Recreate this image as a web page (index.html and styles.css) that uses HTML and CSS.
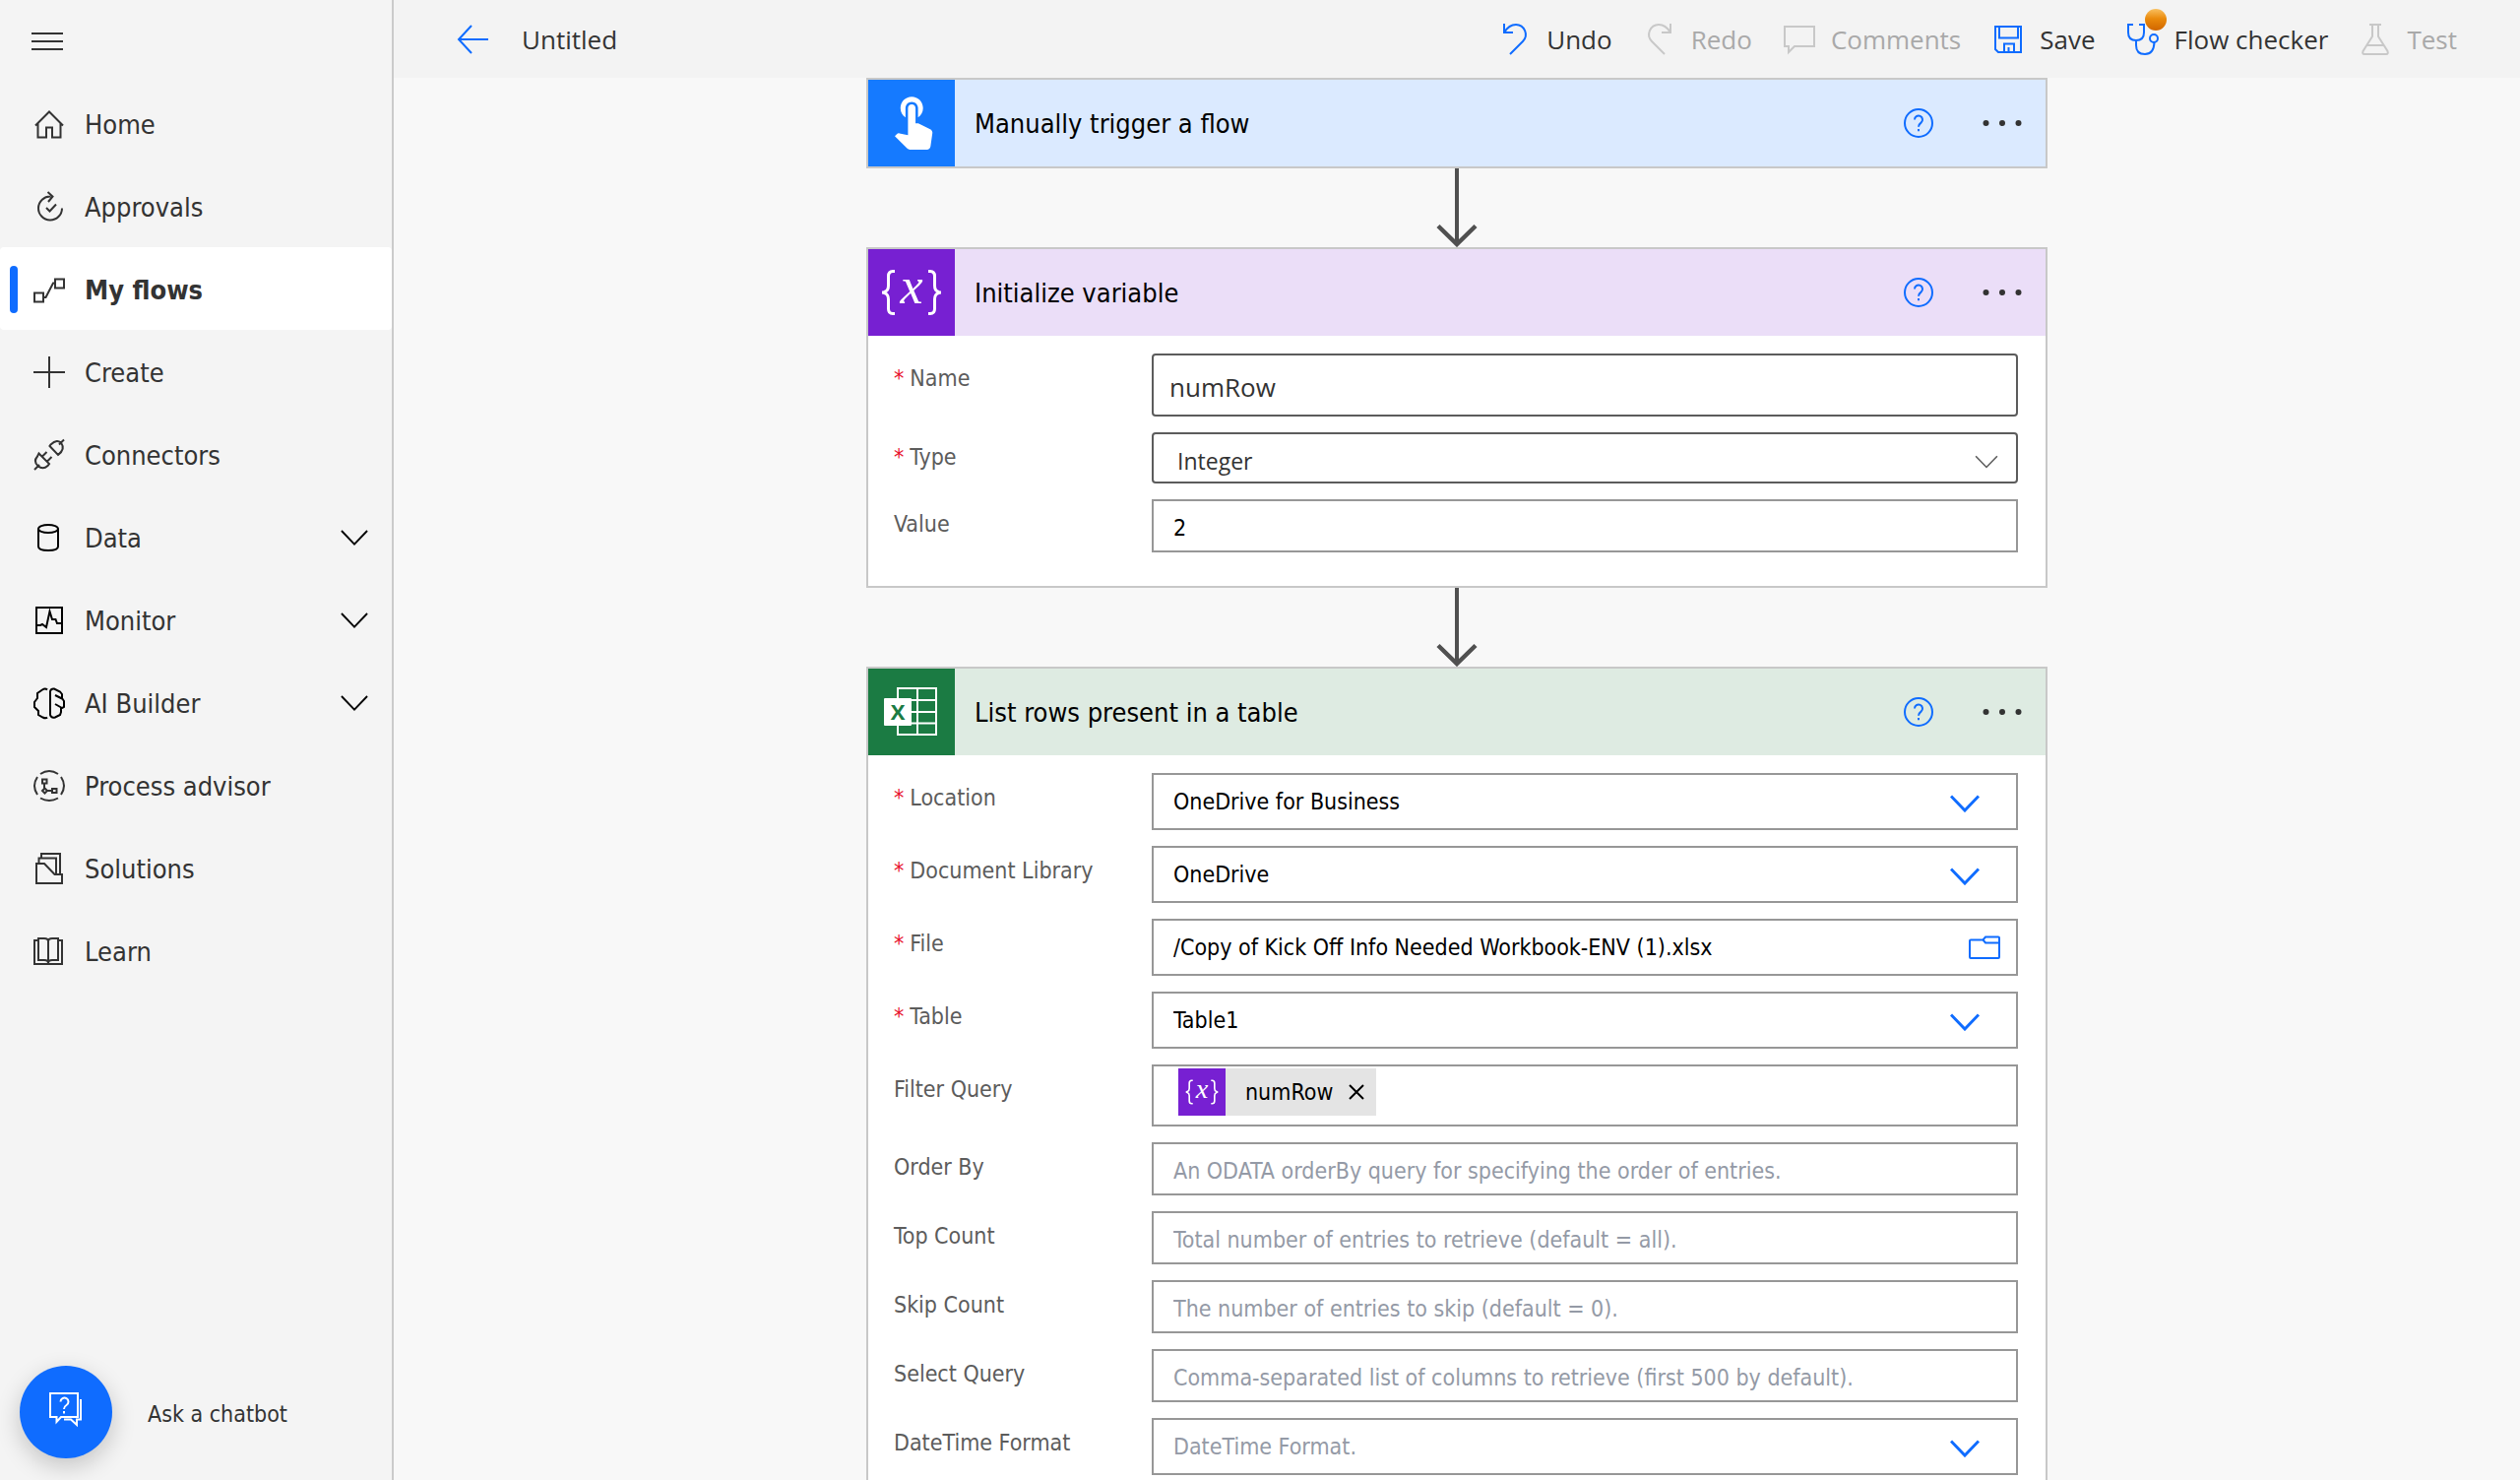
FILE: index.html
```html
<!DOCTYPE html>
<html lang="en">
<head>
<meta charset="utf-8">
<meta name="viewport" content="width=device-width, initial-scale=1">
<title>Untitled flow</title>
<link rel="stylesheet" href="styles.css">
</head>
<body>
<svg class="defs" aria-hidden="true">
  <symbol id="chevron" viewBox="0 0 30 18"><path d="M1 1.500 15 16 29 1.500"/></symbol>
  <symbol id="help" viewBox="0 0 30 30"><circle cx="15" cy="15" r="14"/><path d="M11 11.500a4 4 0 1 1 6.500 3.100c-1.700 1.300-2.500 2-2.500 4.200M15 21v2.200"/></symbol>
  <symbol id="dots" viewBox="0 0 40 8"><circle cx="3.500" cy="4" r="3"/><circle cx="20" cy="4" r="3"/><circle cx="36.500" cy="4" r="3"/></symbol>
  <symbol id="braces" viewBox="0 0 88 88">
    <path d="M27 22.500h-2q-4.500 0-4.500 5v9.500q0 5-3.500 6.200-1.500.8-3 .8 1.500 0 3 .8 3.500 1.200 3.500 6.200v9.500q0 5 4.500 5h2M61 22.500h2q4.500 0 4.500 5v9.500q0 5 3.500 6.200 1.500.8 3 .8-1.500 0-3 .8-3.500 1.200-3.500 6.200v9.500q0 5-4.500 5h-2" fill="none" stroke="#fff" stroke-width="3"/>
  </symbol>
</svg>

<nav class="sidebar" aria-label="Main">
  <button class="menu-toggle" type="button" aria-label="Toggle menu">
    <svg width="32" height="18" viewBox="0 0 32 18"><path d="M0 1h32M0 9h32M0 17h32"/></svg>
  </button>
  <ul class="nav-list">
    <li><a class="nav-item" href="#home">
      <svg class="nav-icon" viewBox="0 0 32 32"><path d="M2 17.500 16 3.500l14 14M4.500 15.500V29.500h8.500V19.500h6v10h8.500V15.500"/></svg>Home</a></li>
    <li><a class="nav-item" href="#approvals">
      <svg class="nav-icon" viewBox="0 0 32 32"><path d="M17.500 5.500A12 12 0 1 0 29 17.500M14.500 1l5 4.500-4.500 5.500M13 17l3.500 3.500 6.500-7"/></svg>Approvals</a></li>
    <li><a class="nav-item nav-item-active" href="#flows" aria-current="page">
      <svg class="nav-icon" viewBox="0 0 32 32"><path d="M1 19.500h9v9h-9zM22 5.500h9v9h-9zM10 24h2.500L20 9.500h2"/></svg>My flows</a></li>
    <li><a class="nav-item" href="#create">
      <svg class="nav-icon" viewBox="0 0 32 32"><path d="M16 0v32M0 16h32"/></svg>Create</a></li>
    <li><a class="nav-item" href="#connectors">
      <svg class="nav-icon" viewBox="0 0 32 32"><path d="M1 31l5-5M26 5.500l5-5M4 17.500q-4.500 5 .5 9.500t10 0l1.500-2L5.500 14.500zM16.500 7l8.500 9q7.500-6 3.500-11.500T17.500 5.500zM9 17.500l4.500-4.500M14 22.500l4.500-4.500"/></svg>Connectors</a></li>
    <li><a class="nav-item nav-item-dark" href="#data">
      <svg class="nav-icon" viewBox="0 0 32 32"><ellipse cx="15" cy="7" rx="10" ry="4"/><path d="M5 7v18q0 4 10 4t10-4V7"/></svg>Data
      <svg class="nav-chevron"><use href="#chevron"/></svg></a></li>
    <li><a class="nav-item nav-item-dark" href="#monitor">
      <svg class="nav-icon" viewBox="0 0 32 32"><path d="M3 3h26v26H3zM3 21h4l2-1 4 3L16.500 7l2.500 8h3.500l1.500 4h5"/></svg>Monitor
      <svg class="nav-chevron"><use href="#chevron"/></svg></a></li>
    <li><a class="nav-item nav-item-dark" href="#ai-builder">
      <svg class="nav-icon" viewBox="0 0 32 32"><path d="M14 2.500q-2-2-5 0L4 6v5l-3 4v5l4 4v4l4.500 2.500q3 1.500 4.500 0M17 4q1-3 4-2.500L27 4.500 29 7v4l2 3v6l-3 1.500V25l-1 3-5 2.500q-4 1-5-2.500zM22 8l8 4M22 17l7 4"/></svg>AI Builder
      <svg class="nav-chevron"><use href="#chevron"/></svg></a></li>
    <li><a class="nav-item" href="#process-advisor">
      <svg class="nav-icon" viewBox="0 0 32 32"><path d="M7 4Q16-2 25 4M28 7q6 9 0 18M25 28.500q-9 5-18 0M4 25Q-2 16 4 7"/><path d="M9 9.500h4.500v4H9zM19 19h4.500v4H19zM11 13.500V19M14 21h5M11.500 18.500l2.500 2.500-2.500 2.500L9 21z"/></svg>Process advisor</a></li>
    <li><a class="nav-item" href="#solutions">
      <svg class="nav-icon" viewBox="0 0 32 32"><path d="M3 11h8l10.500 11H29v9H3zM5.500 11V5.500H23V21M8 5V1h19v20"/></svg>Solutions</a></li>
    <li><a class="nav-item" href="#learn">
      <svg class="nav-icon" viewBox="0 0 32 32"><path d="M5 5H1v24h28V5h-4M5 3h6q4 0 4 3 0-3 4-3h6v22h-6q-4 0-4 3 0-3-4-3H5zM15 6v22"/></svg>Learn</a></li>
  </ul>
  <div class="chatbot">
    <button class="chatbot-button" id="chatbot" type="button" aria-label="Ask a chatbot">
      <svg width="36" height="38" viewBox="0 0 36 38"><path d="M2 3h28v24H13l-4.500 5v-5H2zM33 9v20.500h-4v5.500l-6-5.500h-7"/><path d="M12.500 11.500a4 4 0 1 1 6 3.500c-1.700 1-2.500 2-2.500 4M16 21v2.500"/></svg>
    </button>
    <label for="chatbot">Ask a chatbot</label>
  </div>
</nav>

<div class="workspace">
  <header class="topbar">
    <button class="back" type="button" aria-label="Back">
      <svg width="32" height="30" viewBox="0 0 32 30"><path d="M15 1 2 15l13 14M2 15h30"/></svg>
    </button>
    <h1 class="flow-name">Untitled</h1>
    <div class="commands">
      <button class="command" type="button">
        <svg class="command-icon" viewBox="0 0 32 32"><path d="M5 0v9h9M5 9Q10 1 17 1A10 10 0 0 1 24 18L11 31"/></svg>Undo</button>
      <button class="command" type="button" disabled>
        <svg class="command-icon" viewBox="0 0 32 32"><path d="M27 0v9h-9M27 9Q22 1 15 1A10 10 0 0 0 8 18L21 31"/></svg>Redo</button>
      <button class="command" type="button" disabled>
        <svg class="command-icon" viewBox="0 0 32 32"><path d="M1 3h30v20H11l-6 6v-6H1z"/></svg>Comments</button>
      <button class="command" type="button">
        <svg class="command-icon" viewBox="0 0 32 32"><path d="M3 3h26v26H6l-3-3zM7 3v11.500h19V3M12 29v-8.500h10V29M16.500 29v-5"/></svg>Save</button>
      <button class="command" type="button">
        <span class="command-badged">
          <svg class="command-icon" viewBox="0 0 32 32"><path d="M6 1H1v8q0 8 8 8t8-8V1h-5M9 17v5q0 9 9 9t9.500-12"/><circle cx="27" cy="15" r="4"/></svg>
          <span class="badge"></span>
        </span>Flow checker</button>
      <button class="command" type="button" disabled>
        <svg class="command-icon" viewBox="0 0 32 32"><path d="M10 1h12M13 1v12L3.500 28q-1 3 1.500 3h22q2.500 0 1.500-3L19 13V1M8 22h16"/></svg>Test</button>
    </div>
  </header>

  <main class="canvas">
    <section class="card">
      <header class="card-header card-header-trigger">
        <svg class="card-icon" viewBox="0 0 88 88"><path class="solid" transform="translate(14.900 9.700) scale(2.550)" d="M9 11.240V7.500C9 6.120 10.120 5 11.500 5S14 6.120 14 7.500v3.740c1.210-.81 2-2.180 2-3.740C16 5.010 13.990 3 11.500 3S7 5.010 7 7.500c0 1.560.79 2.930 2 3.740zm9.840 4.630l-4.540-2.260c-.17-.07-.35-.11-.54-.11H13v-6c0-.83-.67-1.500-1.500-1.500S10 6.670 10 7.500v10.740l-3.430-.72c-.08-.01-.15-.03-.24-.03-.31 0-.59.13-.79.33l-.79.8 4.940 4.940c.27.27.65.44 1.060.44h6.790c.75 0 1.330-.55 1.440-1.280l.75-5.270c.01-.07.02-.14.02-.2 0-.62-.38-1.160-.91-1.380z"/></svg>
        <h2 class="card-title">Manually trigger a flow</h2>
        <button class="icon-button" type="button" aria-label="Help"><svg class="help"><use href="#help"/></svg></button>
        <button class="icon-button" type="button" aria-label="More"><svg class="dots"><use href="#dots"/></svg></button>
      </header>
    </section>

    <svg class="arrow" viewBox="0 0 44 80"><path d="M22 0v76" stroke-width="4"/><path d="M3 58.500 22 77l19-18.500" stroke-width="4.500"/></svg>

    <section class="card">
      <header class="card-header card-header-variable">
        <svg class="card-icon" viewBox="0 0 88 88"><use href="#braces"/><text x="44" y="55" text-anchor="middle" class="var-x">x</text></svg>
        <h2 class="card-title">Initialize variable</h2>
        <button class="icon-button" type="button" aria-label="Help"><svg class="help"><use href="#help"/></svg></button>
        <button class="icon-button" type="button" aria-label="More"><svg class="dots"><use href="#dots"/></svg></button>
      </header>
      <div class="card-body">
        <div class="row">
          <label for="name"><span class="star">*</span>Name</label>
          <input class="field field-name" id="name" type="text" value="numRow">
        </div>
        <div class="row">
          <label for="type"><span class="star">*</span>Type</label>
          <div class="select-wrap">
            <select class="field field-type" id="type"><option>Integer</option></select>
            <svg class="select-chevron select-chevron-thin"><use href="#chevron"/></svg>
          </div>
        </div>
        <div class="row">
          <label for="value">Value</label>
          <input class="field field-text" id="value" type="text" value="2">
        </div>
      </div>
    </section>

    <svg class="arrow" viewBox="0 0 44 80"><path d="M22 0v76" stroke-width="4"/><path d="M3 58.500 22 77l19-18.500" stroke-width="4.500"/></svg>

    <section class="card">
      <header class="card-header card-header-excel">
        <svg class="card-icon" viewBox="0 0 88 88"><path d="M30 20h39v47H30zM50 20v47M30 32h39M30 44h39M30 55.500h39" fill="none" stroke="#fff" stroke-width="2"/><rect class="solid" x="16" y="30" width="28" height="28" rx="1"/><text x="30" y="52" text-anchor="middle" class="excel-x">X</text></svg>
        <h2 class="card-title">List rows present in a table</h2>
        <button class="icon-button" type="button" aria-label="Help"><svg class="help"><use href="#help"/></svg></button>
        <button class="icon-button" type="button" aria-label="More"><svg class="dots"><use href="#dots"/></svg></button>
      </header>
      <div class="card-body">
        <div class="row">
          <label for="location"><span class="star">*</span>Location</label>
          <div class="select-wrap">
            <select class="field field-select" id="location"><option>OneDrive for Business</option></select>
            <svg class="select-chevron"><use href="#chevron"/></svg>
          </div>
        </div>
        <div class="row">
          <label for="library"><span class="star">*</span>Document Library</label>
          <div class="select-wrap">
            <select class="field field-select" id="library"><option>OneDrive</option></select>
            <svg class="select-chevron"><use href="#chevron"/></svg>
          </div>
        </div>
        <div class="row">
          <label for="file"><span class="star">*</span>File</label>
          <div class="field field-file">
            <input class="bare-input" id="file" type="text" value="/Copy of Kick Off Info Needed Workbook-ENV (1).xlsx">
            <button class="icon-button" type="button" aria-label="Browse">
              <svg class="folder" viewBox="0 0 32 24"><path d="M1 5.500q0-1 1-1h12.500L17 1.500h13q1 0 1 1V22q0 1-1 1H2q-1 0-1-1zM14.500 4.500 17 7.500h14"/></svg>
            </button>
          </div>
        </div>
        <div class="row">
          <label for="table"><span class="star">*</span>Table</label>
          <div class="select-wrap">
            <select class="field field-select" id="table"><option>Table1</option></select>
            <svg class="select-chevron"><use href="#chevron"/></svg>
          </div>
        </div>
        <div class="row">
          <label for="filter">Filter Query</label>
          <div class="field field-filter">
            <span class="token">
              <svg class="token-icon" viewBox="0 0 88 88"><use href="#braces"/><text x="44" y="55" text-anchor="middle" class="var-x">x</text></svg>
              numRow
              <button class="icon-button token-remove" type="button" aria-label="Remove numRow"><svg width="16" height="18" viewBox="0 0 16 18"><path d="M1 2l14 14M15 2 1 16"/></svg></button>
            </span>
            <input class="bare-input" id="filter" type="text">
          </div>
        </div>
        <div class="row">
          <label for="order">Order By</label>
          <input class="field field-text" id="order" type="text" placeholder="An ODATA orderBy query for specifying the order of entries.">
        </div>
        <div class="row">
          <label for="top">Top Count</label>
          <input class="field field-text" id="top" type="text" placeholder="Total number of entries to retrieve (default = all).">
        </div>
        <div class="row">
          <label for="skip">Skip Count</label>
          <input class="field field-text" id="skip" type="text" placeholder="The number of entries to skip (default = 0).">
        </div>
        <div class="row">
          <label for="select">Select Query</label>
          <input class="field field-text" id="select" type="text" placeholder="Comma-separated list of columns to retrieve (first 500 by default).">
        </div>
        <div class="row">
          <label for="datetime">DateTime Format</label>
          <div class="select-wrap">
            <select class="field field-select field-empty" id="datetime"><option>DateTime Format.</option></select>
            <svg class="select-chevron"><use href="#chevron"/></svg>
          </div>
        </div>
      </div>
    </section>
  </main>
</div>
</body>
</html>
```
FILE: styles.css
```css
* {
  box-sizing: border-box;
}

body {
  --ui: "DejaVu Sans Condensed", "Noto Sans", sans-serif;
  --segoe: "Open Sans", "Noto Sans", sans-serif;
  --blue: #0f6cff;
  --text: #333;
  display: flex;
  height: 100vh;
  margin: 0;
  overflow: hidden;
  background: #f8f8f8;
  color: var(--text);
  font-family: var(--ui);
  font-size: 23px;
}

.defs {
  position: absolute;
  width: 0;
  height: 0;
}

svg {
  display: block;
  flex: none;
  fill: none;
  stroke: currentColor;
  stroke-width: 2;
}

button {
  padding: 0;
  border: 0;
  background: none;
  color: inherit;
  font: inherit;
}

h1,
h2 {
  margin: 0;
  font-weight: 400;
}

.solid {
  fill: #fff;
  stroke: none;
}

/* Sidebar */
.sidebar {
  display: flex;
  flex: none;
  flex-direction: column;
  width: 400px;
  border-right: 2px solid #cbcbcb;
  background: #f4f4f4;
}

.menu-toggle {
  display: flex;
  align-items: center;
  height: 83px;
  padding: 0 32px;
}

.nav-list {
  margin: 0;
  padding: 0;
  list-style: none;
}

.nav-item {
  display: flex;
  align-items: center;
  gap: 20px;
  height: 84px;
  padding: 2px 24px 0 34px;
  border-radius: 4px;
  color: var(--text);
  font-size: 27px;
  text-decoration: none;
}

.nav-item-active {
  padding-left: 10px;
  background: #fff;
  font-weight: 700;
}

.nav-item-active::before {
  width: 8px;
  height: 48px;
  margin-right: -4px;
  border-radius: 4px;
  background: var(--blue);
  content: "";
}

.nav-icon {
  width: 32px;
  height: 32px;
  overflow: visible;
}

.nav-item-dark svg {
  color: #000;
}

.nav-chevron {
  width: 28px;
  height: 18px;
  margin-left: auto;
}

.chatbot {
  display: flex;
  align-items: center;
  gap: 36px;
  margin-top: auto;
  padding: 0 20px 22px;
}

.chatbot label {
  padding-top: 4px;
}

.chatbot-button {
  display: flex;
  align-items: center;
  justify-content: center;
  width: 94px;
  height: 94px;
  padding-bottom: 6px;
  border-radius: 50%;
  background: var(--blue);
  box-shadow: 0 8px 24px rgba(0, 0, 0, 0.2);
  color: #fff;
}

/* Top bar */
.workspace {
  display: flex;
  flex: 1;
  flex-direction: column;
  min-width: 0;
}

.topbar {
  display: flex;
  flex: none;
  align-items: center;
  height: 79px;
  padding: 0 64px;
  background: #f3f3f3;
  font-family: var(--segoe);
  font-size: 26px;
}

.back {
  color: var(--blue);
}

.flow-name {
  margin-left: 34px;
  font-size: 26px;
}

.commands {
  display: flex;
  gap: 32px;
  margin-left: auto;
}

.command {
  display: flex;
  align-items: center;
  gap: 16px;
}

.command-icon {
  width: 32px;
  height: 32px;
  color: var(--blue);
}

.command:disabled {
  color: #a9a9a9;
}

.command:disabled .command-icon {
  color: #c8c8c8;
}

.command-badged {
  position: relative;
}

.badge {
  position: absolute;
  top: -15px;
  right: -8px;
  width: 22px;
  height: 22px;
  border-radius: 50%;
  background: linear-gradient(#f9c060, #ea8a0c 45%, #d06600);
}

/* Flow canvas */
.canvas {
  display: flex;
  flex: 1;
  flex-direction: column;
  align-items: center;
  min-height: 0;
  overflow: hidden;
}

.card {
  flex: none;
  width: 100%;
  max-width: 1200px;
  border: 2px solid #c8c8c8;
  background: #fff;
}

.card-header {
  display: flex;
  align-items: center;
  padding-right: 24px;
}

.card-header-trigger {
  background: #dbeaff;
}

.card-header-trigger .card-icon {
  background: #157aff;
}

.card-header-variable {
  background: #ebdef8;
}

.card-header-variable .card-icon,
.token-icon {
  background: #7720d2;
}

.card-header-excel {
  background: #deebe2;
}

.card-header-excel .card-icon {
  background: #1b7b43;
}

.card-icon {
  width: 88px;
  height: 88px;
}

.var-x {
  fill: #fff;
  stroke: none;
  font: italic 52px "Liberation Serif", serif;
}

.excel-x {
  fill: #1b7b43;
  stroke: none;
  font: bold 22px "Open Sans", sans-serif;
}

.card-title {
  flex: 1;
  padding-left: 20px;
  color: #000;
  font-size: 27px;
}

.help {
  width: 30px;
  height: 30px;
  margin-right: 50px;
  color: var(--blue);
}

.dots {
  width: 40px;
  height: 8px;
  fill: #333;
  stroke: none;
}

.arrow {
  width: 44px;
  height: 80px;
  color: #505050;
}

/* Card forms */
.card-body {
  display: grid;
  gap: 16px;
  padding: 18px 28px 34px 26px;
}

.row {
  display: grid;
  grid-template-columns: 262px 1fr;
}

.row > label {
  padding-top: 9px;
  color: #5c5c5c;
  line-height: 32px;
}

.star {
  margin-right: 6px;
  color: #e8112d;
}

.field {
  width: 100%;
  height: 58px;
  margin: 0;
  padding: 0 20px;
  border: 2px solid #979797;
  border-radius: 0;
  outline: 0;
  background: #fff;
  color: #000;
  font-family: var(--ui);
  font-size: 23px;
  appearance: none;
}

.field-text {
  height: 54px;
  padding-top: 4px;
}

.field-text::placeholder,
.field-empty {
  color: #949aa6;
  opacity: 1;
}

.field-name,
.field-type {
  border-color: #5c5c5c;
  border-radius: 4px;
  color: var(--text);
  font-family: var(--segoe);
}

.field-name {
  height: 64px;
  padding: 4px 16px 0;
  font-size: 26px;
}

.field-type {
  height: 52px;
  padding: 6px 24px 0;
}

.field-file,
.field-filter {
  display: flex;
  align-items: center;
}

.field-file {
  padding-right: 16px;
}

.field-filter {
  align-items: flex-start;
  height: 63px;
  padding: 2px 25px;
}

.bare-input {
  flex: 1;
  min-width: 0;
  height: 48px;
  padding: 0;
  border: 0;
  outline: 0;
  background: none;
  color: inherit;
  font: inherit;
}

.folder {
  width: 32px;
  height: 24px;
  color: var(--blue);
}

.select-wrap {
  display: grid;
  align-items: center;
}

.select-wrap > * {
  grid-area: 1 / 1;
}

.select-chevron {
  justify-self: end;
  width: 30px;
  height: 18px;
  margin: 4px 39px 0 0;
  color: var(--blue);
  stroke-width: 3;
  pointer-events: none;
}

.select-chevron-thin {
  width: 24px;
  height: 14px;
  margin: 8px 20px 0 0;
  color: #5c5c5c;
  stroke-width: 2;
}

.token {
  display: flex;
  align-items: center;
  height: 48px;
  padding-right: 12px;
  background: #e4e4e4;
}

.token-icon {
  width: 48px;
  height: 48px;
  margin-right: 20px;
}

.token-remove {
  margin-left: 16px;
}
```
